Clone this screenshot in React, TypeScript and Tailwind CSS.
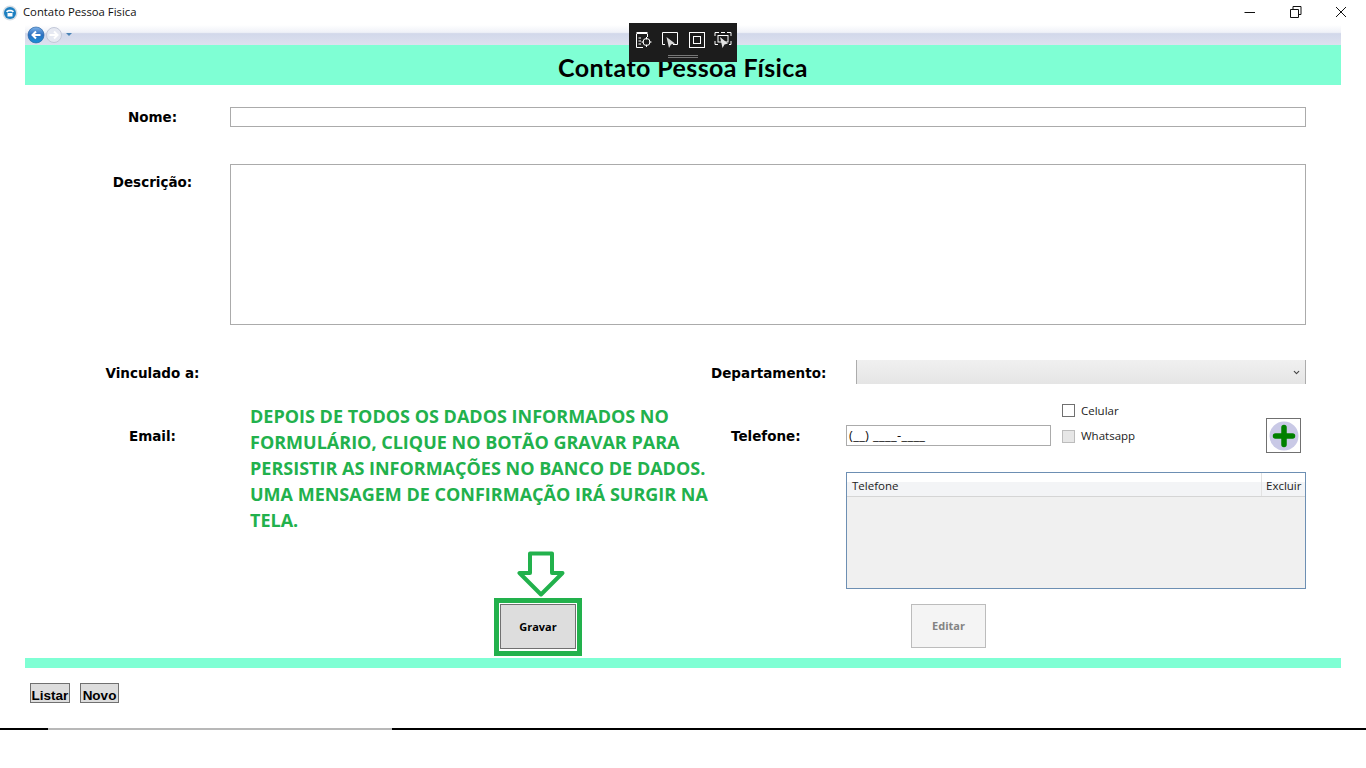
import { ChevronDown } from "lucide-react";

function PhoneLogo() {
  return (
    <svg width="16" height="16" viewBox="0 0 16 16">
      <circle cx="8" cy="8" r="7.5" fill="#d5dde4" />
      <circle cx="8" cy="8" r="6" fill="#1c7fc0" />
      <path d="M4 6.5 C5 4 11 4 12 6.5 L10.5 7.5 L9.5 6.5 H6.5 L5.5 7.5 Z" fill="#fff" />
      <rect x="5.5" y="8" width="5" height="3.5" fill="#fff" />
    </svg>
  );
}

function NavButtons() {
  return (
    <svg width="50" height="18" viewBox="0 0 50 18">
      <defs>
        <linearGradient id="backBlue" x1="0" y1="0" x2="0" y2="1">
          <stop offset="0" stopColor="#7fb2e8" />
          <stop offset="0.5" stopColor="#2a6fc0" />
          <stop offset="1" stopColor="#1a8fd8" />
        </linearGradient>
      </defs>
      <circle cx="9" cy="9" r="8" fill="url(#backBlue)" stroke="#1d5a9c" strokeWidth="0.6" />
      <path d="M13.5 9 H5.5 M9 5.5 L5.5 9 L9 12.5" fill="none" stroke="#fff" strokeWidth="2" />
      <circle cx="27" cy="9" r="7.5" fill="#e6e9f2" stroke="#c3c8d8" />
      <path d="M22.5 9 H30.5 M27 5.5 L30.5 9 L27 12.5" fill="none" stroke="#fff" strokeWidth="2" />
      <path d="M39 7 H45 L42 10 Z" fill="#4a83b5" />
    </svg>
  );
}

function CaptureBar() {
  return (
    <div className="absolute left-[629px] top-[23px] flex h-[39px] w-[108px] flex-col bg-[#1c1c1c]">
      <div className="flex h-[31px] items-center justify-between pl-[6px] pr-[5px] pt-[3px]">
        <svg width="18" height="18" viewBox="0 0 18 18" fill="none" stroke="#fff" strokeWidth="1">
          <path d="M1.5 2 H12.5" strokeWidth="2" />
          <path d="M1.5 3 V16.5 H8 M12.5 3 V6" />
          <path d="M3.5 7 H6 M3.5 10 H6 M3.5 13 H6" />
          <circle cx="11.5" cy="11" r="3.5" />
          <path d="M11.5 6 V8.5 M11.5 13.5 V16 M6.5 11 H9 M14 11 H16.5" />
        </svg>
        <svg width="18" height="18" viewBox="0 0 18 18" fill="none" stroke="#fff">
          <path d="M4 13.5 H1.5 V1.5 H16.5 V13.5 H12" />
          <path d="M5.5 6 L14 12.5 L10 13.5 L8 17 Z" fill="#d8d8d8" stroke="none" />
        </svg>
        <svg width="18" height="18" viewBox="0 0 18 18" fill="none" stroke="#fff">
          <rect x="1.5" y="1.5" width="15" height="15" />
          <rect x="5.5" y="5.5" width="7" height="7" />
        </svg>
        <svg width="18" height="18" viewBox="0 0 18 18" fill="none" stroke="#fff">
          <path d="M1 5 V1.5 H5 M13 1.5 H17 V5 M1 10 V13.5 H4 M17 10 V13.5 H15 M7 1.5 H11" />
          <rect x="4" y="4.5" width="10" height="6.5" />
          <path d="M6 6 L14 12.5 L10.5 13.5 L8.5 17 Z" fill="#e2e2e2" stroke="none" />
        </svg>
      </div>
      <div className="mx-auto mt-[1px] h-[3px] w-[30px] border-y border-[#777]" />
    </div>
  );
}

function DownArrow() {
  return (
    <svg width="48" height="46" viewBox="0 0 48 46" className="absolute left-[517px] top-[551px]">
      <path
        d="M13 2.5 H35 V22 H45.5 L24 43.5 L2.5 22 H13 Z"
        fill="#fff"
        stroke="#22b14c"
        strokeWidth="4"
        strokeLinejoin="round"
      />
    </svg>
  );
}

const labelClass = "font-['DejaVu_Sans',sans-serif] text-[13.5px] font-bold leading-[20px] text-black";
const uiText = "font-['Open_Sans',sans-serif] text-[11.5px] leading-[16px] text-[#222]";

export default function App() {
  return (
    <div className="relative flex h-[768px] w-[1366px] flex-col overflow-hidden bg-white">
      <header className="flex h-[25px] items-center">
        <div className="ml-[2px] mr-[5px]">
          <PhoneLogo />
        </div>
        <span className="mb-[1px] font-['Open_Sans',sans-serif] text-[11.3px] text-[#111]">Contato Pessoa Fisica</span>
        <div className="ml-auto mr-[6px] flex items-center">
          <svg width="140" height="20" viewBox="0 0 140 20" fill="none" stroke="#111">
            <path d="M24.5 9.5 H35" />
            <path d="M70.5 6.5 H78.5 V14.5 H70.5 Z M73 6 V3.5 H81 V11.5 H79" />
            <path d="M116 4 L126 14 M126 4 L116 14" />
          </svg>
        </div>
      </header>

      <main className="mx-[25px] flex flex-1 flex-col">
        <div className="flex h-[20px] items-center bg-[linear-gradient(#ffffff_0%,#f0f2f8_35%,#e8ebf4_40%,#d2d8ea_43%,#dde1ef_100%)] pl-[2px]">
          <NavButtons />
        </div>
        <h1 className="flex h-[40px] items-center justify-center bg-[#7fffd4] pt-[6px] font-['Lato',sans-serif] text-[25px] font-bold tracking-[0.4px] text-black">
          Contato Pessoa Física
        </h1>

        <div className="mt-[22px] flex h-[20px] items-center">
          <div className={`${labelClass} w-[205px] pl-[50px] text-center`}>Nome:</div>
          <div className="h-[20px] w-[1076px] border border-[#ababab]" />
        </div>

        <div className="mt-[37px] flex h-[161px]">
          <div className={`${labelClass} w-[205px] pl-[50px] pt-[8px] text-center`}>Descrição:</div>
          <div className="h-[161px] w-[1076px] border border-[#ababab]" />
        </div>

        <div className="mt-[35px] flex h-[24px] items-center">
          <div className={`${labelClass} w-[205px] pl-[50px] pt-[1px] text-center`}>Vinculado a:</div>
          <div className={`${labelClass} ml-[481px] w-[145px] pt-[1px]`}>Departamento:</div>
          <div className="flex h-[24px] w-[450px] items-center justify-end border-x border-[#acacac] bg-[linear-gradient(#f0f0f0,#e5e5e5)] pr-[4px]">
            <ChevronDown size={9} strokeWidth={3} color="#444" />
          </div>
        </div>

        <div className="mt-[20px] flex h-[185px]">
          <div className={`${labelClass} w-[205px] pl-[50px] pt-[22px] text-center`}>Email:</div>
          <div className="ml-[501px] flex w-[115px] flex-col pt-[22px]">
            <div className={labelClass}>Telefone:</div>
          </div>
          <div className="flex w-[460px] flex-col">
            <div className="flex h-[49px]">
              <div className="mt-[21px] h-[21px] w-[205px] border border-[#ababab] px-[2px] font-['Open_Sans',sans-serif] text-[13px] leading-[19px] tracking-[0.3px] text-[#111]">
                (__) ____-____
              </div>
              <div className="-mt-[1px] ml-[11px] flex w-[110px] flex-col gap-[10px]">
                <label className={`flex h-[15px] items-center gap-[6px] ${uiText}`}>
                  <span className="h-[13px] w-[13px] border border-[#707070] bg-white" />
                  Celular
                </label>
                <label className={`flex h-[16px] items-center gap-[6px] ${uiText}`}>
                  <span className="h-[13px] w-[13px] border border-[#bcbcbc] bg-[#e6e6e6]" />
                  Whatsapp
                </label>
              </div>
              <div className="ml-[94px] mt-[14px] flex h-[35px] w-[35px] items-center justify-center border border-[#707070]">
                <svg width="30" height="30" viewBox="0 0 30 30">
                  <circle cx="15" cy="15" r="14.5" fill="#c9c9e6" />
                  <path d="M15 6.5 V23.5 M6.5 15 H23.5" stroke="#008000" strokeWidth="5.5" strokeLinecap="round" />
                </svg>
              </div>
            </div>
            <div className="mt-[19px] flex h-[117px] flex-col border border-[#6d8fb3] bg-[#f0f0f0]">
              <div className={`flex h-[24px] border-b border-[#d5d5d5] bg-[linear-gradient(#ffffff,#ffffff_40%,#f3f4f6_40%,#f3f4f6)] ${uiText}`}>
                <div className="flex-1 pl-[5px] pt-[5px]">Telefone</div>
                <div className="w-[44px] border-l border-[#e2e2e2] pl-[4px] pt-[5px]">Excluir</div>
              </div>
            </div>
          </div>
        </div>

        <div className="mt-[15px] flex h-[45px]">
          <button className="ml-[475px] h-[45px] w-[76px] border border-[#707070] bg-[#dddddd] pt-[1px] font-['Open_Sans',sans-serif] text-[11px] font-bold text-black">
            Gravar
          </button>
          <button className="ml-[335px] h-[44px] w-[75px] border border-[#bcbcbc] bg-[#f4f4f4] pt-[1px] font-['Open_Sans',sans-serif] text-[11px] font-bold text-[#838383]">
            Editar
          </button>
        </div>

        <div className="mt-[9px] h-[10px] bg-[#7fffd4]" />

        <div className="ml-[5px] mt-[15px] flex h-[20px] gap-[10px]">
          <button className="w-[40px] border border-[#707070] bg-[#dddddd] pt-[4px] font-['Liberation_Sans',sans-serif] text-[13.5px] font-bold leading-[16px] text-black">
            Listar
          </button>
          <button className="w-[39px] border border-[#707070] bg-[#dddddd] pt-[4px] font-['Liberation_Sans',sans-serif] text-[13.5px] font-bold leading-[16px] text-black">
            Novo
          </button>
        </div>
      </main>

      <footer className="mb-[38px] flex h-[2px]">
        <div className="w-[48px] bg-black" />
        <div className="w-[344px] bg-[#b8b8b8]" />
        <div className="flex-1 bg-black" />
      </footer>

      <CaptureBar />
      <div className="absolute left-[250px] top-[403px] w-[480px] font-['Open_Sans',sans-serif] text-[18px] font-bold leading-[26px] text-[#22b14c]">
        DEPOIS DE TODOS OS DADOS INFORMADOS NO
        <br />
        FORMULÁRIO, CLIQUE NO BOTÃO GRAVAR PARA
        <br />
        PERSISTIR AS INFORMAÇÕES NO BANCO DE DADOS.
        <br />
        UMA MENSAGEM DE CONFIRMAÇÃO IRÁ SURGIR NA
        <br />
        TELA.
      </div>
      <DownArrow />
      <div className="absolute left-[494px] top-[598px] h-[58px] w-[88px] border-[5px] border-[#22b14c]" />
    </div>
  );
}
